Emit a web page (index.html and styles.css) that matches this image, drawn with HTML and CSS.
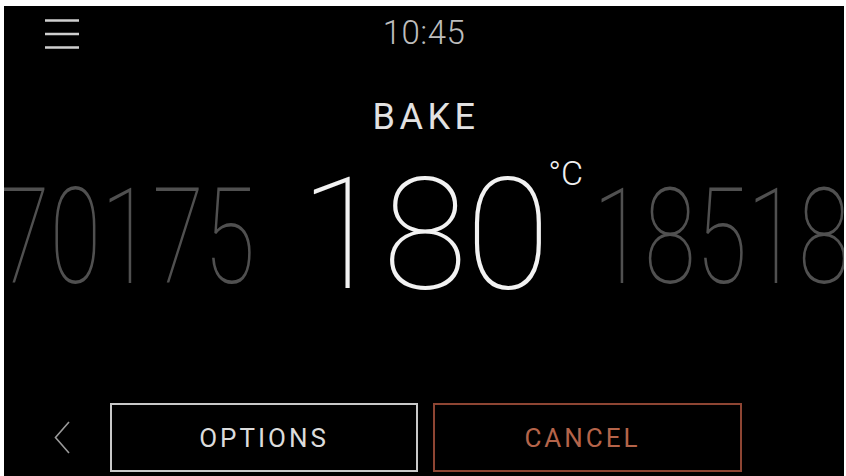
FILE: index.html
```html
<!DOCTYPE html>
<html lang="en">
<head>
<meta charset="utf-8">
<title>Bake</title>
<link rel="stylesheet" href="styles.css">
</head>
<body>
<div class="screen">
  <header class="topbar">
    <button class="menu" aria-label="Menu">
      <svg width="34" height="30" viewBox="0 0 34 30"><path d="M0 1.5H34M0 15H34M0 28.5H34" stroke="#cfcfcf" stroke-width="2.4" fill="none"/></svg>
    </button>
    <div class="clock">10:45</div>
    <div></div>
  </header>
  <h1 class="title">BAKE</h1>
  <div class="dial">
    <div class="side side-left">170175</div>
    <div class="current">180<span class="unit">°C</span></div>
    <div class="side side-right">185180</div>
  </div>
  <footer class="actions">
    <button class="back" aria-label="Back">
      <svg width="16" height="33" viewBox="0 0 16 33"><path d="M15 1L1.5 16.5L15 32" stroke="#9a9a9a" stroke-width="1.6" fill="none"/></svg>
    </button>
    <button class="btn btn-options">OPTIONS</button>
    <button class="btn btn-cancel">CANCEL</button>
  </footer>
</div>
</body>
</html>
```
FILE: styles.css
```css
html, body {
  margin: 0;
  padding: 0;
  background: #ffffff;
}
body {
  font-family: Roboto, "Liberation Sans", sans-serif;
  overflow: hidden;
}
.screen {
  margin: 6px 2px 0 4px;
  height: 470px;
  background: #000;
  display: flex;
  flex-direction: column;
  overflow: hidden;
}
.topbar {
  height: 56px;
  display: grid;
  grid-template-columns: 1fr auto 1fr;
  align-items: start;
  padding: 0 41px;
  box-sizing: border-box;
}
.menu {
  background: none;
  border: 0;
  padding: 0;
  margin-top: 13px;
  width: 34px;
  height: 30px;
  justify-self: start;
}
.menu svg, .back svg { display: block; }
.clock {
  margin-top: 10px;
  font-size: 33px;
  line-height: 33px;
  font-weight: 300;
  color: #bdbdbd;
  letter-spacing: 0.5px;
}
.title {
  margin: 37px 0 0;
  text-align: center;
  font-size: 36px;
  line-height: 36px;
  font-weight: 400;
  letter-spacing: 4.5px;
  padding-left: 4px;
  color: #e2e2e2;
}
.dial {
  margin-top: 13px;
  padding-top: 10px;
  height: 155px;
  display: flex;
  justify-content: center;
  align-items: center;
  overflow: hidden;
  gap: 45px;
}
.current {
  flex: none;
  position: relative;
  font-size: 155px;
  line-height: 155px;
  font-weight: 100;
  color: #f2f2f2;
  letter-spacing: -2px;
}
.unit {
  position: absolute;
  left: 100%;
  top: -2px;
  font-size: 34px;
  line-height: 34px;
  font-weight: 300;
  letter-spacing: 0;
  color: #f0f0f0;
}
.side {
  flex: none;
  font-size: 134px;
  line-height: 134px;
  font-weight: 100;
  color: #505050;
  white-space: nowrap;
  margin-top: 4px;
}
.side-left {
  transform: scaleX(0.7);
  transform-origin: right center;
}
.side-right {
  transform: scaleX(0.7);
  transform-origin: left center;
}
.actions {
  margin-top: auto;
  padding: 0 0 4px 50px;
  display: flex;
  align-items: center;
}
.back {
  background: none;
  border: 0;
  padding: 0;
  width: 16px;
  height: 33px;
  margin-right: 40px;
}
.btn {
  height: 69px;
  box-sizing: border-box;
  background: #000;
  font-family: Roboto, "Liberation Sans", sans-serif;
  font-size: 26px;
  font-weight: 400;
  letter-spacing: 3px;
  padding: 0;
}
.btn-options {
  width: 308px;
  border: 2px solid #c9c9c9;
  color: #dcdcdc;
  margin-right: 15px;
}
.btn-cancel {
  width: 309px;
  border: 2px solid #8e4533;
  color: #b5644a;
  padding-right: 10px;
}
```
